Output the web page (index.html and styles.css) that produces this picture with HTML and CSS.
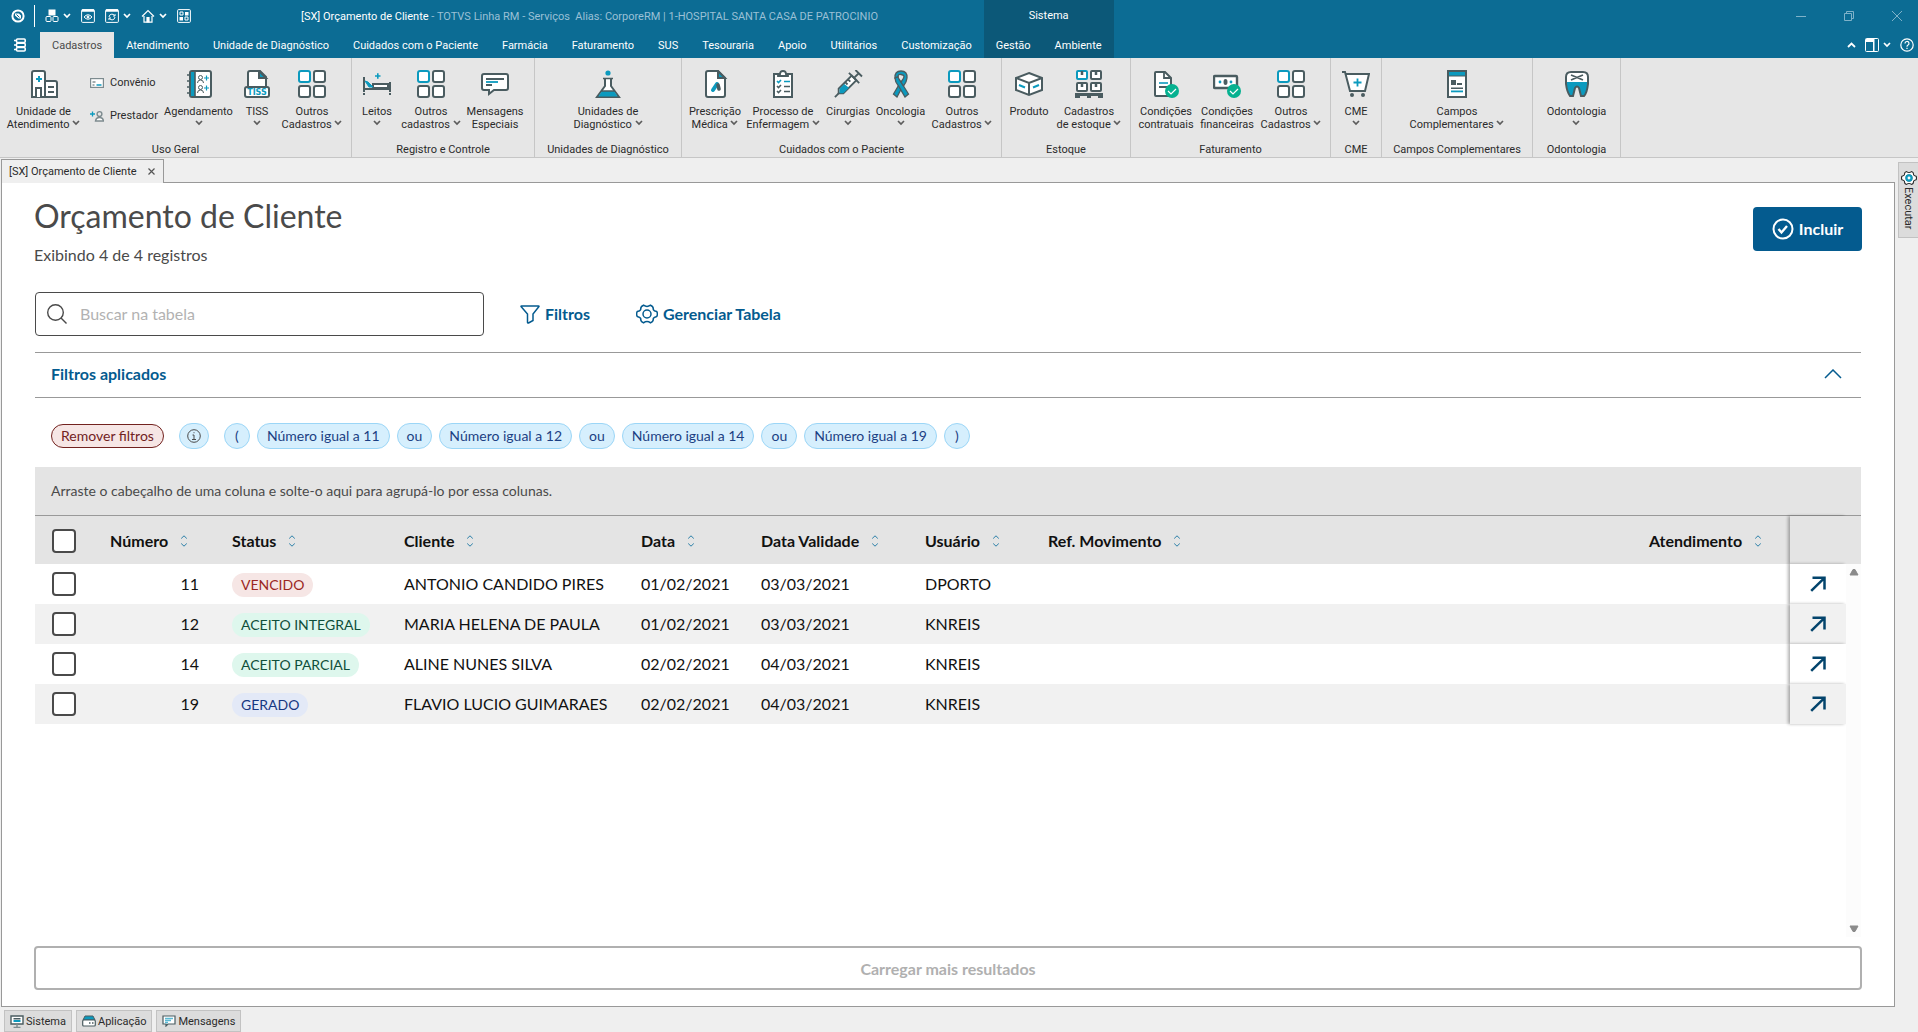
FILE: index.html
```html
<!DOCTYPE html>
<html lang="pt-BR">
<head>
    <meta charset="UTF-8">
    <meta name="viewport" content="width=device-width, initial-scale=1.0">
    <title>[SX] Orçamento de Cliente - TOTVS Linha RM</title>
    <link rel="stylesheet" href="styles.css">
</head>
<body>
    <!-- shared icons -->
    <svg class="sprite" aria-hidden="true">
        <symbol id="chev" viewBox="0 0 8 6"><path d="M1 1l3 3 3-3" fill="none" stroke="currentColor" stroke-width="1.7"/></symbol>
        <symbol id="sort" viewBox="0 0 8 14"><path d="M1.200 4.500L4 1.800l2.800 2.700M1.200 9.500L4 12.200l2.800-2.700" fill="none" stroke="#2a7fa8" stroke-width="1"/></symbol>
        <symbol id="open" viewBox="0 0 16 16"><path d="M2.500 1.800h12V13.500M14 2.300L1.200 14.800" fill="none" stroke="#03446c" stroke-width="2.500"/></symbol>
        <symbol id="four" viewBox="0 0 28 28">
            <g fill="#fff" stroke="#4a5c60" stroke-width="2">
                <rect x="1" y="1" width="11" height="11" rx="2" stroke="#0c9abe"/>
                <rect x="16" y="1" width="11" height="11" rx="2"/>
                <rect x="1" y="16" width="11" height="11" rx="2"/>
                <rect x="16" y="16" width="11" height="11" rx="2"/>
            </g>
        </symbol>
        <symbol id="gear" viewBox="0 0 22 20">
            <path d="M7.500 1.200Q11 3.600 14.500 1.200Q17.600 2.200 17.300 5.600Q18 7 20.800 7.600Q22 10 20.800 12.400Q18 13 17.300 14.400Q17.600 17.800 14.500 18.800Q11 16.400 7.500 18.800Q4.400 17.800 4.700 14.400Q4 13 1.200 12.400Q0 10 1.200 7.600Q4 7 4.700 5.600Q4.400 2.200 7.500 1.200z" fill="none" stroke="currentColor" stroke-width="1.500"/>
            <circle cx="11" cy="10" r="4" fill="none" stroke="currentColor" stroke-width="1.500"/>
        </symbol>
    </svg>

    <header class="top">
        <div class="titlebar">
            <svg class="logo" width="14" height="14" viewBox="0 0 14 14"><circle cx="7" cy="7" r="5.600" fill="none" stroke="#fff" stroke-width="2"/><path d="M4 4.500h4l2 2v3H7.500L4 6.500z" fill="#fff"/><path d="M5.500 5.500l3 3" stroke="#0c6c94"/></svg>
            <span class="divider"></span>
            <button class="tool" aria-label="Módulos"><svg width="14" height="14" viewBox="0 0 14 14" stroke="#fff"><rect x="4" y="1" width="6" height="5" fill="#fff"/><rect x="1" y="7.500" width="5" height="5" rx="1" fill="none"/><rect x="8" y="7.500" width="5" height="5" rx="1" fill="none"/></svg><svg class="chev" width="8" height="6"><use href="#chev"/></svg></button>
            <button class="tool" aria-label="Visualizar"><svg width="14" height="14" viewBox="0 0 14 14" fill="none" stroke="#fff"><rect x=".6" y=".6" width="12.800" height="12.800" rx="1"/><path d="M1 1.500h12" stroke-width="2.500"/><path d="M3 8q4-4.500 8 0q-4 4.500-8 0z"/><circle cx="7" cy="8" r="1" fill="#fff"/></svg></button>
            <button class="tool" aria-label="Atualizar"><svg width="14" height="14" viewBox="0 0 14 14" fill="none" stroke="#fff"><rect x=".6" y=".6" width="12.800" height="12.800" rx="1"/><path d="M1 1.500h12" stroke-width="2.500"/><path d="M4 8a3 3 0 0 1 5.500-1.500M10 8a3 3 0 0 1-5.500 1.500M10 5v2H8M4 11V9h2"/></svg><svg class="chev" width="8" height="6"><use href="#chev"/></svg></button>
            <button class="tool" aria-label="Início"><svg width="14" height="14" viewBox="0 0 14 14" fill="none" stroke="#fff" stroke-width="1.200"><path d="M1 7.500L7 1.500l6 6M3 7v6.200h8V7"/><path d="M6 8.500h2v4.500H6z" fill="#fff"/></svg><svg class="chev" width="8" height="6"><use href="#chev"/></svg></button>
            <button class="tool" aria-label="Painel"><svg width="14" height="14" viewBox="0 0 14 14" fill="none" stroke="#fff"><rect x=".6" y=".6" width="12.800" height="12.800" rx="1"/><path d="M3 3h3v3H3zM8 8h3v3H8z"/><path d="M8 3h3.500v3.500H8zM2.500 8H6v3.500H2.500z" fill="#fff" stroke="none"/></svg></button>
            <span class="title"><b>[SX] Orçamento de Cliente</b> - TOTVS Linha RM - Serviços&nbsp; Alias: CorporeRM | 1-HOSPITAL SANTA CASA DE PATROCINIO</span>
            <span class="window-buttons">
                <button aria-label="Minimizar"><svg width="10" height="10" viewBox="0 0 10 10"><path d="M0 5.500h10"/></svg></button>
                <button aria-label="Restaurar"><svg width="10" height="10" viewBox="0 0 10 10"><path d="M.5 2.500h7v7h-7zM2.500 2.500v-2h7v7h-2"/></svg></button>
                <button aria-label="Fechar"><svg width="10" height="10" viewBox="0 0 10 10"><path d="M0 0l10 10M10 0L0 10"/></svg></button>
            </span>
        </div>
        <nav class="menu">
            <button class="file" aria-label="Menu"><svg width="12" height="14" viewBox="0 0 12 14" fill="none" stroke="#fff" stroke-width="1.600"><rect x="2.500" y="1" width="8.700" height="3.500" rx="1"/><rect x="2.500" y="5.200" width="8.700" height="3.500" rx="1"/><rect x="2.500" y="9.500" width="8.700" height="3.500" rx="1"/><path d="M0 2.500h3M0 7h3M0 11.500h3"/></svg></button>
            <a class="tab active" href="#">Cadastros</a>
            <a class="tab" href="#">Atendimento</a>
            <a class="tab" href="#">Unidade de Diagnóstico</a>
            <a class="tab" href="#">Cuidados com o Paciente</a>
            <a class="tab" href="#">Farmácia</a>
            <a class="tab" href="#">Faturamento</a>
            <a class="tab" href="#">SUS</a>
            <a class="tab" href="#">Tesouraria</a>
            <a class="tab" href="#">Apoio</a>
            <a class="tab" href="#">Utilitários</a>
            <a class="tab" href="#">Customização</a>
            <div class="context">
                <span class="context-name">Sistema</span>
                <div class="context-tabs">
                    <a class="tab" href="#">Gestão</a>
                    <a class="tab" href="#">Ambiente</a>
                </div>
            </div>
            <span class="menu-right">
                <button aria-label="Recolher"><svg width="9" height="6" viewBox="0 0 9 6"><path d="M1 5l3.500-3.500L8 5" fill="none" stroke="#fff" stroke-width="1.800"/></svg></button>
                <button class="layout" aria-label="Layout"><svg width="14" height="14" viewBox="0 0 14 14"><rect x=".5" y=".5" width="13" height="13" rx="1" fill="none" stroke="#fff"/><path d="M1 1h8v3H1zM8 1h1.500v12H8z" fill="#fff"/></svg><svg class="chev" width="8" height="6"><use href="#chev"/></svg></button>
                <button aria-label="Ajuda"><svg width="14" height="14" viewBox="0 0 14 14" fill="none" stroke="#fff" stroke-width="1.200"><circle cx="7" cy="7" r="6.200"/><path d="M5 5.500a2 2 0 1 1 2.800 1.800q-.8.400-.8 1.400M7 9.700v1.300"/></svg></button>
            </span>
        </nav>
    </header>

    <section class="ribbon">
        <div class="group uso">
            <div class="items">
                <button class="item"><svg width="28" height="28" viewBox="0 0 28 28" fill="#fff" stroke="#4a5c60" stroke-width="2"><path d="M2 27V3q0-2 2-2h9q2 0 2 2v24z"/><path d="M15 11h10q2 0 2 2v14H15z"/><path d="M6 27v-9h5v9M18 17h6M18 22h6"/><path d="M6 9h6M9 6v6" stroke="#0c9abe"/></svg><span>Unidade de<br>Atendimento <svg class="chev" width="8" height="6"><use href="#chev"/></svg></span></button>
                <div class="stack">
                    <button class="mini"><svg width="14" height="12" viewBox="0 0 14 12"><rect x=".6" y="1.600" width="12.800" height="8.800" fill="#fff" stroke="#7d8b8f" stroke-width="1.200"/><path d="M2.500 4.500h3v1h-3zM2.500 7.500h2v1h-2z" fill="#4a5c60"/><path d="M6.500 8h5" stroke="#0c9abe" stroke-width="1.500"/></svg>Convênio</button>
                    <button class="mini"><svg width="14" height="12" viewBox="0 0 14 12" fill="none"><path d="M0 4h5M2.500 1.500v5" stroke="#0c9abe" stroke-width="1.300"/><circle cx="9.500" cy="4" r="2.400" stroke="#7d8b8f" stroke-width="1.400"/><path d="M5.500 11q.5-3.500 4-3.500t4 3.500z" fill="#fff" stroke="#7d8b8f" stroke-width="1.400"/></svg>Prestador</button>
                </div>
                <button class="item"><svg width="28" height="28" viewBox="0 0 28 28"><rect x="5" y="1" width="21" height="26" rx="2" fill="#fff" stroke="#4a5c60" stroke-width="2"/><path d="M6 2h4v24H6z" fill="#0c9abe"/><path d="M10 2v24M2 5h4M2 11h4M2 17h4M2 23h4" stroke="#4a5c60" stroke-width="1.600"/><g fill="none" stroke="#4a5c60"><circle cx="15.500" cy="7.500" r="2"/><path d="M12.500 13q0-3 3-3t3 3"/><circle cx="15.500" cy="17.500" r="2"/><path d="M12.500 23q0-3 3-3t3 3"/></g><path d="M19 8h5M21.500 5.500v5M19 18h5M21.500 15.500v5" stroke="#0c9abe" stroke-width="1.200"/></svg><span>Agendamento<br><svg class="chev" width="8" height="6"><use href="#chev"/></svg></span></button>
                <button class="item"><svg width="28" height="28" viewBox="0 0 28 28"><path d="M5 16V3q0-2 2-2h10l6 6v9" fill="#fff" stroke="#4a5c60" stroke-width="2"/><path d="M16 1v7h7z" fill="#0c9abe" stroke="#4a5c60" stroke-width="2"/><rect x="2" y="17" width="24" height="10" rx="2" fill="#fff" stroke="#4a5c60" stroke-width="2"/><text class="tiss" x="14" y="25" text-anchor="middle">TISS</text></svg><span>TISS<br><svg class="chev" width="8" height="6"><use href="#chev"/></svg></span></button>
                <button class="item"><svg width="28" height="28"><use href="#four"/></svg><span>Outros<br>Cadastros <svg class="chev" width="8" height="6"><use href="#chev"/></svg></span></button>
            </div>
            <div class="group-name">Uso Geral</div>
        </div>
        <div class="group registro">
            <div class="items">
                <button class="item"><svg width="28" height="28" viewBox="0 0 28 28" fill="none" stroke="#4a5c60" stroke-width="2"><path d="M1 7v15M27 12v10M1 19h26"/><path d="M10 14h15v4H10z" fill="#fff"/><path d="M2 11l3 1 5 5H6z" fill="#0c9abe" stroke="#0c9abe" stroke-width="1"/><path d="M12 6h5.500M14.800 3.300v5.500" stroke="#0c9abe" stroke-width="1.600"/><path d="M1 23v2M27 23v2"/></svg><span>Leitos<br><svg class="chev" width="8" height="6"><use href="#chev"/></svg></span></button>
                <button class="item"><svg width="28" height="28"><use href="#four"/></svg><span>Outros<br>cadastros <svg class="chev" width="8" height="6"><use href="#chev"/></svg></span></button>
                <button class="item"><svg width="28" height="28" viewBox="0 0 28 28"><path d="M3 4h22q2 0 2 2v12q0 2-2 2H13l-5 4v-4H3q-2 0-2-2V6q0-2 2-2z" fill="#fff" stroke="#4a5c60" stroke-width="2"/><path d="M5 9h18M5 15h6" stroke="#4a5c60" stroke-width="1.800"/><path d="M5 12h12" stroke="#0c9abe" stroke-width="1.800"/></svg><span>Mensagens<br>Especiais</span></button>
            </div>
            <div class="group-name">Registro e Controle</div>
        </div>
        <div class="group unidades">
            <div class="items">
                <button class="item"><svg width="28" height="28" viewBox="0 0 28 28"><path d="M11 9v7L3 27h22l-8-11V9" fill="#fff" stroke="#4a5c60" stroke-width="2"/><path d="M8 21h12l4 6H4z" fill="#0c9abe"/><path d="M9 8.500h10M3 27.300h22M7 21h14" stroke="#4a5c60" stroke-width="1.600"/><circle cx="14" cy="3" r="2.600" fill="#0c9abe"/></svg><span>Unidades de<br>Diagnóstico <svg class="chev" width="8" height="6"><use href="#chev"/></svg></span></button>
            </div>
            <div class="group-name">Unidades de Diagnóstico</div>
        </div>
        <div class="group cuidados">
            <div class="items">
                <button class="item"><svg width="28" height="28" viewBox="0 0 28 28"><path d="M7 1h10l7 7v17q0 2-2 2H7q-2 0-2-2V3q0-2 2-2z" fill="#fff" stroke="#4a5c60" stroke-width="2"/><path d="M17 1v7h7z" fill="#0c9abe" stroke="#4a5c60" stroke-width="2"/><path d="M12 20l4-6" stroke="#0c9abe" stroke-width="4" stroke-linecap="round"/><path d="M17 15l1 4" stroke="#4a5c60" stroke-width="3.600" stroke-linecap="round"/></svg><span>Prescrição<br>Médica <svg class="chev" width="8" height="6"><use href="#chev"/></svg></span></button>
                <button class="item"><svg width="28" height="28" viewBox="0 0 28 28" fill="none"><path d="M5 4h18v23H5z" fill="#fff" stroke="#4a5c60" stroke-width="2"/><path d="M9 6V4h2q0-3 3-3t3 3h2v2z" fill="#fff" stroke="#4a5c60" stroke-width="1.800"/><path d="M8 11l1.500 1.500L12 10M15 11.500h6" stroke="#0c9abe" stroke-width="1.600"/><path d="M8 16l1.500 1.500L12 15M15 16.500h6M8 21l1.500 1.500L12 20M15 21.500h6" stroke="#4a5c60" stroke-width="1.600"/></svg><span>Processo de<br>Enfermagem <svg class="chev" width="8" height="6"><use href="#chev"/></svg></span></button>
                <button class="item"><svg width="30" height="30" viewBox="0 0 30 30" fill="none" stroke="#4a5c60" stroke-width="2"><path d="M1 29l5-5"/><path d="M5 20L19 6l5 5-14 14H5z" fill="#fff"/><path d="M6 20l5-5 5 4-6 6H6z" fill="#0c9abe" stroke="none"/><path d="M16 3l11 11M21.500 8.500l5-5M23 0l7 7M12 13l2.500 2.500M15 10l2.500 2.500"/></svg><span>Cirurgias<br><svg class="chev" width="8" height="6"><use href="#chev"/></svg></span></button>
                <button class="item"><svg width="28" height="28" viewBox="0 0 28 28" stroke="#4a5c60" stroke-width="1.300"><path d="M16.500 14.500L10 27l-3.500-3L13 13z" fill="#0c9abe"/><path d="M8 8q0 4 3.500 8L18 27l3.500-3L14 12Q11 8 11 6.500z" fill="#0c9abe"/><path d="M8 8q-.5-7 6-7t6 7q-.3 4-3.500 8L14 12q3-4 3-5.500T14 4.500 11 6.500L8 8z" fill="#0c9abe"/></svg><span>Oncologia<br><svg class="chev" width="8" height="6"><use href="#chev"/></svg></span></button>
                <button class="item"><svg width="28" height="28"><use href="#four"/></svg><span>Outros<br>Cadastros <svg class="chev" width="8" height="6"><use href="#chev"/></svg></span></button>
            </div>
            <div class="group-name">Cuidados com o Paciente</div>
        </div>
        <div class="group estoque">
            <div class="items">
                <button class="item"><svg width="28" height="28" viewBox="0 0 28 28"><path d="M14 3l13 5v12l-13 5-13-5V8z" fill="#fff" stroke="#4a5c60" stroke-width="2"/><path d="M1 8l13 5 13-5M14 13v12" fill="none" stroke="#4a5c60" stroke-width="2"/><path d="M4 15l6 2.500M24 15l-6 2.500" stroke="#0c9abe" stroke-width="2"/></svg><span>Produto</span></button>
                <button class="item"><svg width="28" height="28" viewBox="0 0 28 28" fill="#fff" stroke="#4a5c60" stroke-width="2"><rect x="2" y="1" width="10" height="8" rx="1" stroke="#0c9abe"/><rect x="16" y="1" width="10" height="8" rx="1"/><rect x="2" y="13" width="10" height="8" rx="1"/><rect x="16" y="13" width="10" height="8" rx="1"/><path d="M7 1v4M21 1v4M7 13v4M21 13v4" stroke-width="2.500"/><path d="M0 24.500h28" stroke-width="3"/><path d="M0 26.500h5M12 26.500h4M23 26.500h5" stroke-width="3"/></svg><span>Cadastros<br>de estoque <svg class="chev" width="8" height="6"><use href="#chev"/></svg></span></button>
            </div>
            <div class="group-name">Estoque</div>
        </div>
        <div class="group faturamento">
            <div class="items">
                <button class="item"><svg width="28" height="28" viewBox="0 0 28 28"><path d="M4 2h9l6 6v18H4q-1 0-1-1V3q0-1 1-1z" fill="#fff" stroke="#4a5c60" stroke-width="2"/><path d="M12 2v6h7M7 17h8" fill="none" stroke="#4a5c60" stroke-width="1.800"/><path d="M7 13h9" stroke="#0c9abe" stroke-width="1.600"/><circle cx="20" cy="21" r="7" fill="#05b190"/><path d="M16 21l3 3 5-5" fill="none" stroke="#fff" stroke-width="1.200"/></svg><span>Condições<br>contratuais</span></button>
                <button class="item"><svg width="28" height="28" viewBox="0 0 28 28"><rect x="1" y="6" width="23" height="12" rx="1" fill="#fff" stroke="#4a5c60" stroke-width="2.400"/><ellipse cx="12.500" cy="12" rx="2" ry="3" fill="#4a5c60"/><circle cx="7" cy="12" r="1.400" fill="#0c9abe"/><circle cx="18" cy="12" r="1.400" fill="#0c9abe"/><circle cx="21" cy="21" r="7" fill="#05b190"/><path d="M17 21l3 3 5-5" fill="none" stroke="#fff" stroke-width="1.200"/></svg><span>Condições<br>financeiras</span></button>
                <button class="item"><svg width="28" height="28"><use href="#four"/></svg><span>Outros<br>Cadastros <svg class="chev" width="8" height="6"><use href="#chev"/></svg></span></button>
            </div>
            <div class="group-name">Faturamento</div>
        </div>
        <div class="group cme">
            <div class="items">
                <button class="item"><svg width="28" height="28" viewBox="0 0 28 28"><path d="M0 2h3l5 19h15l4-17H4" fill="#fff" stroke="#4a5c60" stroke-width="2"/><path d="M11.500 12.500h8M15.500 8.500v8" stroke="#0c9abe" stroke-width="1.800"/><circle cx="10" cy="25" r="2" fill="#4a5c60"/><circle cx="21" cy="25" r="2" fill="#4a5c60"/></svg><span>CME<br><svg class="chev" width="8" height="6"><use href="#chev"/></svg></span></button>
            </div>
            <div class="group-name">CME</div>
        </div>
        <div class="group campos">
            <div class="items">
                <button class="item"><svg width="28" height="28" viewBox="0 0 28 28"><path d="M5 1h18v26H5z" fill="#fff" stroke="#4a5c60" stroke-width="2"/><path d="M6 2h16v4H6z" fill="#0c9abe"/><path d="M5 6h18" stroke="#4a5c60"/><path d="M8 10h5v5H8zM14 13h5v2h-5zM8 17.500h12v1.600H8z" fill="#4a5c60"/><path d="M8 20.500h12v1.800H8z" fill="#0c9abe"/></svg><span>Campos<br>Complementares <svg class="chev" width="8" height="6"><use href="#chev"/></svg></span></button>
            </div>
            <div class="group-name">Campos Complementares</div>
        </div>
        <div class="group odonto">
            <div class="items">
                <button class="item"><svg width="28" height="28" viewBox="0 0 28 28"><path d="M3 7q0-5 5-5h12q5 0 5 5v7q-1 9-4 12h-3l-2-8q-2-3-4 0l-2 8H7q-3-4-4-12z" fill="#fff"/><path d="M3 12h22q0 9-4 14h-3l-2-8q-2-3-4 0l-2 8H7q-4-6-4-14z" fill="#0c9abe"/><path d="M3 7q0-5 5-5h12q5 0 5 5v7q-1 9-4 12h-3l-2-8q-2-3-4 0l-2 8H7q-3-4-4-12z" fill="none" stroke="#4a5c60" stroke-width="2"/><path d="M8 5q5 2 12 5M20 5q-5 2-12 5M11 7.500h6" fill="none" stroke="#4a5c60" stroke-width="1.800"/></svg><span>Odontologia<br><svg class="chev" width="8" height="6"><use href="#chev"/></svg></span></button>
            </div>
            <div class="group-name">Odontologia</div>
        </div>
    </section>

    <div class="workspace">
        <div class="document">
            <div class="doc-tabs">
                <a class="doc-tab" href="#">[SX] Orçamento de Cliente <svg width="7" height="7" viewBox="0 0 7 7"><path d="M.5.5l6 6M6.500.5l-6 6" stroke="#555" stroke-width="1.200"/></svg></a>
            </div>
            <main class="page">
                <div class="page-header">
                    <div>
                        <h1>Orçamento de Cliente</h1>
                        <p class="count">Exibindo 4 de 4 registros</p>
                    </div>
                    <button class="primary"><svg width="22" height="22" viewBox="0 0 22 22" fill="none" stroke="#fff" stroke-width="2"><circle cx="11" cy="11" r="9.500"/><path d="M6.500 11l3 3.500 5.500-6.500" stroke-width="2.400"/></svg>Incluir</button>
                </div>

                <div class="toolbar">
                    <label class="search">
                        <svg width="20" height="20" viewBox="0 0 20 20" fill="none" stroke="#4a4a4a" stroke-width="1.400"><circle cx="8.500" cy="8.500" r="7.800"/><path d="M14 14l5.500 5.500"/></svg>
                        <input type="text" placeholder="Buscar na tabela" aria-label="Buscar na tabela">
                    </label>
                    <button class="link filters"><svg width="20" height="20" viewBox="0 0 20 20" fill="none" stroke="currentColor" stroke-width="1.500"><path d="M1 2.500q0-.5.500-.5h17q.5 0 .5.500L13 10v6.500L8.500 19q-1 .3-1-.7V10z"/></svg>Filtros</button>
                    <button class="link manage"><svg width="22" height="20"><use href="#gear"/></svg>Gerenciar Tabela</button>
                </div>

                <button class="applied">Filtros aplicados<svg width="18" height="10" viewBox="0 0 18 10"><path d="M1 9l8-8 8 8" fill="none" stroke="currentColor" stroke-width="1.500"/></svg></button>

                <div class="chips">
                    <button class="chip remove">Remover filtros</button>
                    <span class="chip info"><svg width="14" height="14" viewBox="0 0 14 14" fill="none" stroke="#4a4a4a"><circle cx="7" cy="7" r="6.300"/><path d="M5.500 6H7v4.500M5 10.500h4M6.500 3.700h1"/></svg></span>
                    <span class="chip paren">(</span>
                    <span class="chip">Número igual a 11</span>
                    <span class="chip">ou</span>
                    <span class="chip">Número igual a 12</span>
                    <span class="chip">ou</span>
                    <span class="chip">Número igual a 14</span>
                    <span class="chip">ou</span>
                    <span class="chip">Número igual a 19</span>
                    <span class="chip paren">)</span>
                </div>

                <div class="group-drop">Arraste o cabeçalho de uma coluna e solte-o aqui para agrupá-lo por essa colunas.</div>

                <div class="grid">
                    <table>
                        <colgroup>
                            <col class="c-check"><col class="c-num"><col class="c-status"><col class="c-client"><col class="c-date"><col class="c-valid"><col class="c-user"><col><col class="c-atend"><col class="c-open"><col class="c-gutter">
                        </colgroup>
                        <thead>
                            <tr>
                                <th class="check"><input type="checkbox" aria-label="Selecionar todos"></th>
                                <th class="right">Número <svg class="sort" width="8" height="14"><use href="#sort"/></svg></th>
                                <th>Status <svg class="sort" width="8" height="14"><use href="#sort"/></svg></th>
                                <th>Cliente <svg class="sort" width="8" height="14"><use href="#sort"/></svg></th>
                                <th>Data <svg class="sort" width="8" height="14"><use href="#sort"/></svg></th>
                                <th>Data Validade <svg class="sort" width="8" height="14"><use href="#sort"/></svg></th>
                                <th>Usuário <svg class="sort" width="8" height="14"><use href="#sort"/></svg></th>
                                <th>Ref. Movimento <svg class="sort" width="8" height="14"><use href="#sort"/></svg></th>
                                <th class="right">Atendimento <svg class="sort" width="8" height="14"><use href="#sort"/></svg></th>
                                <th class="open"></th>
                                <th></th>
                            </tr>
                        </thead>
                        <tbody>
                            <tr>
                                <td class="check"><input type="checkbox" aria-label="Selecionar 11"></td>
                                <td class="right">11</td>
                                <td><span class="tag expired">VENCIDO</span></td>
                                <td>ANTONIO CANDIDO PIRES</td>
                                <td>01/02/2021</td>
                                <td>03/03/2021</td>
                                <td>DPORTO</td>
                                <td></td>
                                <td></td>
                                <td class="open"><a href="#" aria-label="Abrir 11"><svg width="16" height="16"><use href="#open"/></svg></a></td>
                                <td class="gutter"></td>
                            </tr>
                            <tr>
                                <td class="check"><input type="checkbox" aria-label="Selecionar 12"></td>
                                <td class="right">12</td>
                                <td><span class="tag accepted">ACEITO INTEGRAL</span></td>
                                <td>MARIA HELENA DE PAULA</td>
                                <td>01/02/2021</td>
                                <td>03/03/2021</td>
                                <td>KNREIS</td>
                                <td></td>
                                <td></td>
                                <td class="open"><a href="#" aria-label="Abrir 12"><svg width="16" height="16"><use href="#open"/></svg></a></td>
                                <td class="gutter"></td>
                            </tr>
                            <tr>
                                <td class="check"><input type="checkbox" aria-label="Selecionar 14"></td>
                                <td class="right">14</td>
                                <td><span class="tag accepted">ACEITO PARCIAL</span></td>
                                <td>ALINE NUNES SILVA</td>
                                <td>02/02/2021</td>
                                <td>04/03/2021</td>
                                <td>KNREIS</td>
                                <td></td>
                                <td></td>
                                <td class="open"><a href="#" aria-label="Abrir 14"><svg width="16" height="16"><use href="#open"/></svg></a></td>
                                <td class="gutter"></td>
                            </tr>
                            <tr>
                                <td class="check"><input type="checkbox" aria-label="Selecionar 19"></td>
                                <td class="right">19</td>
                                <td><span class="tag created">GERADO</span></td>
                                <td>FLAVIO LUCIO GUIMARAES</td>
                                <td>02/02/2021</td>
                                <td>04/03/2021</td>
                                <td>KNREIS</td>
                                <td></td>
                                <td></td>
                                <td class="open"><a href="#" aria-label="Abrir 19"><svg width="16" height="16"><use href="#open"/></svg></a></td>
                                <td class="gutter"></td>
                            </tr>
                        </tbody>
                    </table>
                    <div class="scrollbar">
                        <svg width="10" height="8" viewBox="0 0 10 8"><path d="M1 7h8L6 1.500H4z" fill="#8b8b8b" stroke="#8b8b8b" stroke-linejoin="round"/></svg>
                        <svg width="10" height="8" viewBox="0 0 10 8"><path d="M1 1h8L6 6.500H4z" fill="#8b8b8b" stroke="#8b8b8b" stroke-linejoin="round"/></svg>
                    </div>
                </div>

                <button class="more" disabled>Carregar mais resultados</button>
            </main>
        </div>
        <aside class="side">
            <button class="side-tab"><svg width="16" height="16" viewBox="0 0 22 20"><circle cx="11" cy="10" r="9" fill="#fff"/><use href="#gear" width="22" height="20"/><circle cx="11" cy="10" r="3.500" fill="#fff" stroke="#0c9abe" stroke-width="3"/></svg>Executar</button>
        </aside>
    </div>

    <footer class="statusbar">
        <button><svg width="14" height="13" viewBox="0 0 14 13"><path d="M1 1h12v8H1z" fill="#fff" stroke="#4a5c60" stroke-width="1.400"/><path d="M3.500 3h7v1.500h-7z" fill="#4a5c60"/><path d="M3.500 5h7v2h-7z" fill="#0c9abe"/><path d="M7 9v3M3.500 12.400h7" stroke="#7d8b8f" stroke-width="1.400"/></svg>Sistema</button>
        <button><svg width="14" height="12" viewBox="0 0 14 12"><path d="M3 1h8l2 4H1z" fill="#0c9abe" stroke="#4a5c60"/><rect x=".7" y="5" width="12.600" height="6" rx="1" fill="#fff" stroke="#4a5c60" stroke-width="1.200"/><path d="M7 8h1.500M10 8h1.500" stroke="#4a5c60" stroke-width="1.500"/></svg>Aplicação</button>
        <button><svg width="14" height="12" viewBox="0 0 14 12"><path d="M1 1h12v8H6l-2 2V9H1z" fill="#fff" stroke="#4a5c60" stroke-width="1.200"/><path d="M3 3.500h8M3 5.500h6M3 7.500h3" stroke="#5bb9d3" stroke-width="1.300"/></svg>Mensagens</button>
    </footer>
</body>
</html>
```
FILE: styles.css
```css
* {
    box-sizing: border-box;
}

body {
    margin: 0;
    height: 100vh;
    display: flex;
    flex-direction: column;
    background: #efefef;
    color: #2b2b2b;
    font-family: Tahoma, Roboto, sans-serif;
    font-size: 11px;
    line-height: 13px;
}

button {
    font: inherit;
    color: inherit;
    background: none;
    border: none;
    padding: 0;
    margin: 0;
    cursor: pointer;
}

a {
    color: inherit;
    text-decoration: none;
}

svg {
    flex: none;
}

.sprite {
    display: none;
}

/* top bar */
.top {
    background: #0c6c94;
    color: #fff;
}

.titlebar {
    display: flex;
    align-items: center;
    height: 32px;
    padding-left: 11px;
}

.divider {
    width: 1px;
    height: 22px;
    margin: 0 10px 0 9px;
    background: #fff;
}

.tool {
    display: flex;
    align-items: center;
    gap: 4px;
    margin-right: 10px;
}

.title {
    margin-left: 100px;
    color: #9ac0d6;
    white-space: nowrap;
}

.title b {
    font-weight: normal;
    color: #fff;
}

.window-buttons {
    display: flex;
    gap: 38px;
    margin-left: auto;
    padding-right: 16px;
}

.window-buttons svg {
    display: block;
    fill: none;
    stroke: #7fb2c9;
}

.menu {
    display: flex;
    height: 26px;
}

.file {
    width: 40px;
    padding: 2px 0 0 0;
}

.tab {
    height: 26px;
    padding: 1px 12px 0;
    line-height: 26px;
    white-space: nowrap;
}

.tab.active {
    background: #e6e6e6;
    color: #4a4a4a;
}

.context {
    margin-top: -32px;
    background: #0c5878;
    text-align: center;
}

.context-name {
    display: block;
    line-height: 32px;
}

.context-tabs {
    display: flex;
}

.menu-right {
    display: flex;
    align-items: center;
    gap: 9px;
    margin-left: auto;
    padding-right: 4px;
}

.menu-right button {
    display: flex;
    align-items: center;
    gap: 4px;
}

/* ribbon */
.ribbon {
    display: flex;
    height: 100px;
    background: #e6e6e6;
    border-bottom: 1px solid #c6c6c6;
}

.group {
    display: flex;
    flex-direction: column;
    justify-content: space-between;
    border-right: 1px solid #c6c6c6;
    padding: 12px 4px 1px;
}

.items {
    display: grid;
    grid-template-columns: 1fr;
}

.uso { width: 352px; }
.uso .items { grid-template-columns: 79px 79px 73px 44px 66px; }
.registro { width: 183px; }
.registro .items { grid-template-columns: 42px 66px 62px; }
.unidades { width: 147px; }
.cuidados { width: 320px; }
.cuidados .items { grid-template-columns: 58px 78px 52px 53px 70px; }
.estoque { width: 129px; }
.estoque .items { grid-template-columns: 46px 74px; }
.faturamento { width: 200px; }
.faturamento .items { grid-template-columns: 62px 60px 68px; }
.cme { width: 51px; }
.campos { width: 151px; }
.odonto { width: 88px; }

.item {
    display: flex;
    flex-direction: column;
    align-items: center;
    height: 62px;
    white-space: nowrap;
}

.item > svg {
    height: 28px;
    margin-bottom: 7px;
}

.chev {
    display: inline-block;
    vertical-align: 2px;
    color: #5c5c5c;
}

.top .chev {
    color: #fff;
}

.tiss {
    font: bold 8px "DejaVu Sans", sans-serif;
    fill: #0c9abe;
}

.stack {
    display: flex;
    flex-direction: column;
    gap: 20px;
    padding: 6px 0 0 7px;
}

.mini {
    display: flex;
    align-items: center;
    gap: 6px;
}

.group-name {
    text-align: center;
    white-space: nowrap;
}

/* document area */
.workspace {
    flex: 1;
    display: flex;
    min-height: 0;
}

.document {
    flex: 1;
    display: flex;
    flex-direction: column;
    padding: 1px 0 0 1px;
}

.doc-tabs {
    display: flex;
    height: 24px;
}

.doc-tab {
    display: flex;
    align-items: center;
    gap: 11px;
    height: 24px;
    padding: 0 8px 0 7px;
    border: 1px solid #999;
    border-bottom: none;
    position: relative;
    background: #efefef;
}

.page {
    flex: 1;
    display: flex;
    flex-direction: column;
    margin-top: -1px;
    padding: 16px 33px;
    background: #fff;
    border: 1px solid #999;
    font-family: Lato, sans-serif;
    font-size: 16px;
    line-height: 24px;
    color: #4a4a4a;
}

.side {
    width: 23px;
    padding: 4px 0 0 3px;
}

.side-tab {
    display: flex;
    align-items: center;
    justify-content: center;
    gap: 1px;
    width: 20px;
    height: 76px;
    writing-mode: vertical-rl;
    background: #dcdcdc;
    border: 1px solid #c2c2c2;
    border-right: none;
}

.page-header {
    display: flex;
    justify-content: space-between;
    align-items: flex-start;
    margin: 0 -1px;
}

h1 {
    margin: 0;
    font-size: 32px;
    line-height: 34px;
    font-weight: normal;
}

.count {
    margin: 10px 0 0;
}

.primary {
    display: flex;
    align-items: center;
    justify-content: center;
    gap: 5px;
    width: 109px;
    height: 44px;
    margin-top: 8px;
    border-radius: 4px;
    background: #045b8f;
    color: #fff;
    font-weight: bold;
}

.toolbar {
    display: flex;
    align-items: center;
    margin-top: 25px;
}

.search {
    display: flex;
    align-items: center;
    gap: 11px;
    width: 449px;
    height: 44px;
    padding: 0 11px;
    border: 1px solid #4a4a4a;
    border-radius: 4px;
}

.search input {
    flex: 1;
    min-width: 0;
    border: none;
    outline: none;
    background: none;
    font: inherit;
}

.search input::placeholder {
    color: #b2b2b2;
}

.link {
    display: flex;
    align-items: center;
    gap: 5px;
    color: #045b8f;
    font-weight: bold;
}

.filters {
    margin-left: 36px;
}

.manage {
    margin-left: 46px;
}

.applied {
    display: flex;
    align-items: center;
    justify-content: space-between;
    height: 46px;
    margin-top: 16px;
    padding: 0 19px 2px 16px;
    border-top: 1px solid #999;
    border-bottom: 1px solid #999;
    color: #045b8f;
    font-weight: bold;
}

.chips {
    display: flex;
    align-items: center;
    gap: 7px;
    padding: 25px 16px 18px;
    font-size: 14px;
}

.chip {
    display: flex;
    align-items: center;
    justify-content: center;
    height: 26px;
    padding: 0 9px;
    border: 1px solid #9bd6f7;
    border-radius: 13px;
    background: #d6effd;
    color: #1c3f83;
    white-space: nowrap;
}

.chip.remove {
    height: 24px;
    margin-right: 8px;
    border-color: #72221f;
    background: #f6e6e5;
    color: #72221f;
}

.chip.info {
    width: 30px;
    padding: 0;
    margin-right: 8px;
}

.chip.paren {
    width: 26px;
    padding: 0;
}

.group-drop {
    height: 49px;
    padding: 0 16px;
    line-height: 48px;
    font-size: 14px;
    background: #e4e4e4;
    border-bottom: 1px solid #999;
}

/* table */
.grid {
    position: relative;
    flex: 1;
}

table {
    width: 100%;
    table-layout: fixed;
    border-collapse: collapse;
    color: #111;
}

.c-check { width: 58px; }
.c-num { width: 123px; }
.c-status { width: 172px; }
.c-client { width: 237px; }
.c-date { width: 120px; }
.c-valid { width: 164px; }
.c-user { width: 123px; }
.c-atend { width: 172px; }
.c-open { width: 56px; }
.c-gutter { width: 15px; }

th, td {
    height: 40px;
    padding: 0 16px;
    text-align: left;
    white-space: nowrap;
}

th {
    height: 48px;
    padding-top: 2px;
    background: #e4e4e4;
}

.right {
    text-align: right;
}

th.right {
    padding-right: 28px;
}

td.right {
    padding-right: 17px;
}

.check {
    padding-left: 17px;
}

tbody tr:nth-child(even) td {
    background: #f1f1f1;
}

tbody tr td.gutter {
    background: none;
}

.sort {
    margin-left: 8px;
    vertical-align: -1px;
}

input[type="checkbox"] {
    appearance: none;
    display: block;
    width: 24px;
    height: 24px;
    margin: 0;
    border: 2px solid #4a4a4a;
    border-radius: 4px;
    background: #fff;
}

td.open, th.open {
    padding: 0 0 0 20px;
    box-shadow: -2px 0 3px rgba(0, 0, 0, 0.3);
}

td.open {
    background: #fff;
}

td.open svg {
    display: block;
}

.tag {
    display: inline-block;
    height: 24px;
    padding: 0 9px;
    border-radius: 12px;
    font-size: 14px;
    line-height: 23px;
    vertical-align: middle;
}

.expired {
    background: #f6e6e5;
    color: #9b2723;
}

.accepted {
    background: #def7ed;
    color: #0f4f3a;
}

.created {
    background: #e3e9f7;
    color: #173782;
}

.scrollbar {
    position: absolute;
    top: 48px;
    right: 0;
    bottom: 0;
    width: 15px;
    display: flex;
    flex-direction: column;
    align-items: center;
    justify-content: space-between;
    padding: 4px 0;
    background: #fcfcfc;
}

.more {
    height: 44px;
    margin: 9px -1px 0;
    padding-top: 2px;
    border: 2px solid #b0b0b0;
    border-radius: 4px;
    color: #b0b0b0;
    font-weight: bold;
}

/* status bar */
.statusbar {
    display: flex;
    gap: 4px;
    height: 25px;
    padding: 3px 4px 0;
}

.statusbar button {
    display: flex;
    align-items: center;
    gap: 2px;
    padding: 0 5px;
    background: #dcdcdc;
    border: 1px solid #c2c2c2;
}
```
